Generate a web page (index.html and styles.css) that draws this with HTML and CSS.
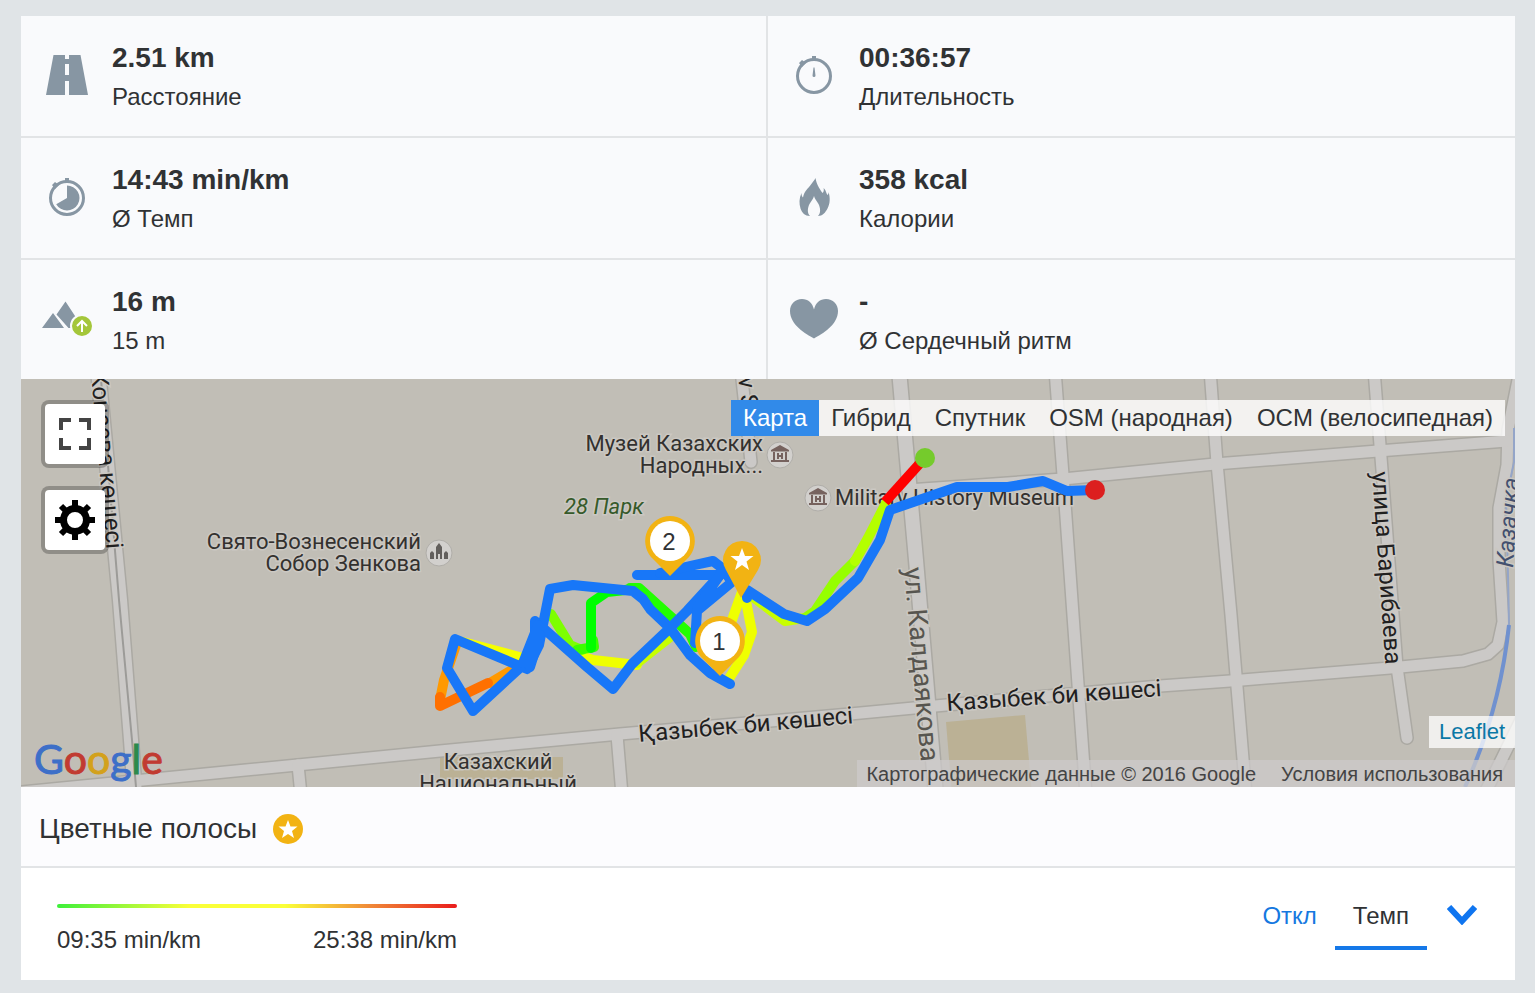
FILE: index.html
```html
<!DOCTYPE html>
<html lang="ru">

<head>
    <meta charset="UTF-8">
    <meta name="viewport" content="width=device-width, initial-scale=1.0">
    <title>Тренировка</title>
    <link rel="stylesheet" href="styles.css">
</head>

<body>
    <main class="workout">
        <!-- Summary -->
        <section class="stats">
            <div class="stat">
                <svg class="stat-icon" viewBox="0 0 52 52">
                    <path d="M12.500 6h27l7.500 40H5z" />
                    <path class="cut" d="M24 5h4v5h-4zM24 15h4v11h-4zM24 32h4v14.500h-4z" />
                </svg>
                <div>
                    <div class="stat-value">2.51 km</div>
                    <div class="stat-label">Расстояние</div>
                </div>
            </div>
            <div class="stat">
                <svg class="stat-icon" viewBox="0 0 52 52">
                    <circle class="line" cx="26" cy="27" r="16.500" />
                    <path d="M24 7h4v5h-4zM11 14l3-3 4 3-4 4zM25.500 18.500h1l1 8a1.500 1.500 0 1 1-3 0z" />
                </svg>
                <div>
                    <div class="stat-value">00:36:57</div>
                    <div class="stat-label">Длительность</div>
                </div>
            </div>
            <div class="stat">
                <svg class="stat-icon" viewBox="0 0 52 52">
                    <circle class="line" cx="26" cy="27" r="16.500" />
                    <path d="M24 7h4v5h-4zM11 14l3-3 4 3-4 4zM26 27V14.500a12.500 12.500 0 1 1-10.800 18.800z" />
                </svg>
                <div>
                    <div class="stat-value">14:43 min/km</div>
                    <div class="stat-label">Ø Темп</div>
                </div>
            </div>
            <div class="stat">
                <svg class="stat-icon" viewBox="0 0 52 52">
                    <path d="M27.500 7c1 6 3 9 7 15 1.500-1 1.500-4 1-5 3 3 2.500 5 4 7 1-1 1-2 1-3 2 6 1.500 12-1 16.500-2 4-5 7.500-9.500 7.500 3-3 2.500-8 .500-12-1.500-3-4-5-4.500-8-.500 3-3 5-4.500 8-2 4-2.500 9 .500 12-5 0-8-3-9.500-7.500-1.500-5-1.500-10 1-15.500 0 2 .500 4 1.500 4.500 1-6 5-9 8-13 2-3 4-5 4.500-6.500z" />
                </svg>
                <div>
                    <div class="stat-value">358 kcal</div>
                    <div class="stat-label">Калории</div>
                </div>
            </div>
            <div class="stat">
                <svg class="stat-icon" viewBox="0 0 52 52">
                    <path d="M1 35l11-15L23 35zM15.500 21.500L24.500 8.500 36 26l-4 9h-4.500z" />
                    <circle class="badge" cx="41" cy="33" r="11" />
                    <path class="arrow" d="M41 39V28M36 33l5-5 5 5" />
                </svg>
                <div>
                    <div class="stat-value">16 m</div>
                    <div class="stat-label">15 m</div>
                </div>
            </div>
            <div class="stat">
                <svg class="stat-icon" viewBox="0 0 52 52">
                    <path d="M26 45.500C18 41 2 32 2 18 2 11 7 6 14 6c6 0 10.500 4 12 10.500C27.500 10 32 6 38 6c7 0 12 5 12 12 0 14-16 23-24 27.500z" />
                </svg>
                <div>
                    <div class="stat-value">-</div>
                    <div class="stat-label">Ø Сердечный ритм</div>
                </div>
            </div>
        </section>

        <!-- Map -->
        <section class="map">
            <svg class="map-canvas" viewBox="21 379 1494 408" preserveAspectRatio="xMidYMid slice">
                <defs>
                    <g id="roads">
                        <path d="M10 793L440 751 620 734 850 714 935 706 1160 686 1230 681 1390 668 1463 661 1488 654 1498 645 1503 622 1499 560 1499 508 1507 465 1508 430 1520 370" />
                        <path d="M908 490L1063 479 1215 464 1378 451 1507 441" />
                        <path d="M1055 370L1063 475 1073 615 1086 795" />
                        <path d="M1210 370L1217 463 1231 615 1246 795" />
                        <path d="M1374 370L1382 470 1397 667 1407 738" />
                        <path d="M298 765L301 795M617 735L622 795M741 370L751 462M1484 795L1524 714" />
                    </g>
                    <path id="wide-roads" d="M899 370L916 560 936 795M98 370L120 600 131 740 135 795" />
                    <g id="museum">
                        <circle class="poi" r="13" />
                        <path class="poi-mark" d="M-9-5L0-10 9-5v1.500H-9zM-7-3h2V5h-2zM5-3h2V5H5zM-9 5H9v2H-9zM-3-2h2v2h2v-2h2v6H1V2h-2v2h-2z" />
                    </g>
                </defs>

                <path class="building" d="M946 722L1025 715 1032 795H952zM440 757H563V779H440z" />
                <use href="#roads" class="road-edge" />
                <use href="#wide-roads" class="road-edge wide" />
                <use href="#roads" class="road-fill" />
                <use href="#wide-roads" class="road-fill wide" />
                <path class="rail" d="M101 379L119 600 132 740 136 787" />
                <path class="river" d="M1509 625Q1500 710 1465 787" />
                <path class="river thin" d="M1514 428V462L1506 500 1508 575 1509 625" />

                <!-- Street and place names -->
                <g class="street">
                    <text transform="translate(91 372) rotate(85)">Конаева көшесі</text>
                    <text transform="translate(737 365) rotate(84)">ev St</text>
                    <text transform="translate(1372 472) rotate(86)">улица Барибаева</text>
                    <text transform="translate(639 742) rotate(-5)">Қазыбек би көшесі</text>
                    <text transform="translate(947 711) rotate(-4)">Қазыбек би көшесі</text>
                    <text class="major" transform="translate(904 568) rotate(85)">ул. Калдаякова</text>
                    <text class="water" transform="translate(1513 568) rotate(-86)">Казачка</text>
                </g>
                <g class="place">
                    <text x="763" y="451" text-anchor="end">Музей Казахских</text>
                    <text x="763" y="473" text-anchor="end">Народных...</text>
                    <text x="421" y="549" text-anchor="end">Свято-Вознесенский</text>
                    <text x="421" y="571" text-anchor="end">Собор Зенкова</text>
                    <text x="835" y="505">Military History Museum</text>
                    <text x="498" y="769" text-anchor="middle">Казахский</text>
                    <text x="498" y="791" text-anchor="middle">Национальный</text>
                    <text class="park" x="564" y="514">28 Парк</text>
                </g>
                <use href="#museum" x="780" y="455" />
                <use href="#museum" x="818" y="498" />
                <circle class="poi" cx="439" cy="553" r="13" />
                <path class="poi-tower" d="M430 559v-6l2-2 2 2v6zM444 559v-6l2-2 2 2v6zM436 559v-12l3-4 3 4v12h-2v-5h-2v5z" />

                <!-- Track coloured by pace -->
                <g class="track">
                    <path stroke="#f6ff00" d="M463 642L523 658" />
                    <path stroke="#ff9900" d="M456 645L444 680 440 700M490 683L522 664" />
                    <path stroke="#ff7000" d="M440 697V706L488 683" />
                    <path stroke="#efff00" d="M578 655L593 660 637 665" />
                    <path stroke="#c8ff00" d="M637 663L670 637" />
                    <path stroke="#7dff00" d="M551 614L570 645 582 650" />
                    <path stroke="#3cff00" d="M577 650L594 647 593 640" />
                    <path stroke="#00ff00" d="M591 648V603L607 592 634 589" />
                    <path stroke="#22ff00" d="M630 588L639 588 690 634 696 647" />
                    <path stroke="#efff00" d="M742 592L732 620M745 596L752 632 744 655 730 677" />
                    <path stroke="#c8ff00" d="M744 590L785 621 805 618" />
                    <path stroke="#96ff00" d="M805 618L815 611 835 581 855 561" />
                    <path stroke="#b4ff00" d="M855 561L868 538 886 503" />
                    <path class="fast" d="M885 502L922 461" />
                </g>
                <g class="route">
                    <path d="M1095 490L1067 491 1043 481 1008 487 957 487 890 510 880 540 858 578 825 609 807 621 784 614 747 590V598" />
                    <path d="M637 575H720L687 611 670 628 632 664 613 689 587 667 543 628 535 621V640L523 665 473 711 447 668 455 639 527 669 539 645 550 589 573 585 633 591 643 599 650 609 670 628 690 655 710 673 730 684" />
                    <path d="M660 573L690 566 713 561 722 568 732 582 697 611 695 643M720 575L697 608M523 663L538 625M530 667L540 635" />
                </g>
                <circle fill="#75cb2c" cx="925" cy="458" r="10" />
                <circle fill="#dc1f1f" cx="1095" cy="490" r="10" />

                <!-- Markers -->
                <g class="pin">
                    <path d="M670 516a25 25 0 0 1 19 41l-19 19-19-19a25 25 0 0 1 19-41z" />
                    <circle cx="670" cy="541" r="20" />
                    <text x="669" y="550">2</text>
                    <path d="M720 616a25 25 0 0 1 19 41l-19 19-19-19a25 25 0 0 1 19-41z" />
                    <circle cx="720" cy="641" r="20" />
                    <text x="719" y="650">1</text>
                    <path d="M742 541a19 19 0 0 1 16 29L741 598 726 570a19 19 0 0 1 16-29z" />
                    <path class="star" d="M742 548l3 8h8.500l-7 5.500 2.500 8.500-7-5-7 5 2.500-8.500-7-5.500h8.500z" />
                </g>
                <text class="google" x="34" y="774"><tspan class="blue">G</tspan><tspan class="red">o</tspan><tspan class="yellow">o</tspan><tspan class="blue">g</tspan><tspan class="green">l</tspan><tspan class="red">e</tspan></text>
            </svg>

            <div class="map-tools">
                <button type="button" class="map-button" aria-label="Во весь экран">
                    <svg viewBox="0 0 32 32">
                        <path fill="#444" d="M0 0h12v4H4v8H0zM20 0h12v12h-4V4h-8zM0 20h4v8h8v4H0zM28 20h4v12H20v-4h8z" />
                    </svg>
                </button>
                <button type="button" class="map-button" aria-label="Настройки">
                    <svg class="gear" viewBox="-20 -20 40 40">
                        <circle r="11.500" fill="none" stroke="#000" stroke-width="7" />
                        <path stroke="#000" stroke-width="6" d="M0-20v7M0 13v7M-20 0h7M13 0h7M-14-14l5 5M9 9l5 5M-14 14l5-5M9-9l5-5" />
                    </svg>
                </button>
            </div>

            <div class="layers">
                <button type="button" class="layer active">Карта</button>
                <button type="button" class="layer">Гибрид</button>
                <button type="button" class="layer">Спутник</button>
                <button type="button" class="layer">OSM (народная)</button>
                <button type="button" class="layer">OCM (велосипедная)</button>
            </div>

            <a class="leaflet" href="#">Leaflet</a>
            <div class="copyright">
                <span>Картографические данные © 2016 Google</span>
                <a href="#">Условия использования</a>
            </div>
        </section>

        <!-- Coloured track settings -->
        <section class="stripes">
            <h2>Цветные полосы</h2>
            <svg class="premium" viewBox="0 0 30 30">
                <circle fill="#f2b313" cx="15" cy="15" r="15" />
                <path fill="#fff" d="M15 6l2.500 6.500h7l-5.500 4.500 2 7-6-4-6 4 2-7-5.500-4.500h7z" />
            </svg>
        </section>
        <section class="pace">
            <div class="legend">
                <div class="legend-bar"></div>
                <div class="legend-labels">
                    <span>09:35 min/km</span>
                    <span>25:38 min/km</span>
                </div>
            </div>
            <nav class="modes">
                <a class="mode" href="#">Откл</a>
                <a class="mode selected" href="#">Темп</a>
                <button type="button" class="more" aria-label="Ещё">
                    <svg viewBox="0 0 30 20">
                        <path d="M2 2l13 14L28 2" />
                    </svg>
                </button>
            </nav>
        </section>
    </main>
</body>

</html>
```

FILE: styles.css
```css
* {
    box-sizing: border-box;
}

body {
    margin: 0;
    padding: 16px 20px 13px 21px;
    background-color: #e0e4e7;
    color: #303234;
    font-family: "Liberation Sans", Arial, sans-serif;
    font-size: 24px;
}

button {
    font: inherit;
    color: inherit;
    border: none;
    cursor: pointer;
}

a {
    text-decoration: none;
}

.workout {
    background-color: #fff;
}

/* Summary */
.stats {
    display: grid;
    grid-template-columns: 1fr 1fr;
    background-color: #f9fafc;
}

.stat {
    display: flex;
    gap: 19px;
    padding: 22px 20px 20px;
    border-bottom: 2px solid #e2e4e6;
}

.stat:nth-child(odd) {
    border-right: 2px solid #e2e4e6;
}

.stat:nth-last-child(-n+2) {
    border-bottom: none;
    padding-bottom: 19px;
}

.stat-icon {
    width: 52px;
    height: 52px;
    margin-top: 11px;
    flex: none;
    fill: #8796a3;
}

.stat-icon .cut {
    fill: #f9fafc;
}

.stat-icon .line {
    fill: none;
    stroke: #8796a3;
    stroke-width: 3;
}

.stat-icon .badge {
    fill: #a4c63a;
    stroke: #f9fafc;
    stroke-width: 2;
}

.stat-icon .arrow {
    fill: none;
    stroke: #fff;
    stroke-width: 2;
}

.stat-value {
    font-size: 28px;
    font-weight: bold;
    line-height: 40px;
}

.stat-label {
    line-height: 38px;
}

/* Map */
.map {
    position: relative;
    height: 408px;
    overflow: hidden;
    background-color: #c1beb6;
}

.map-canvas {
    display: block;
    width: 100%;
    height: 100%;
    font-family: Roboto, sans-serif;
}

.building {
    fill: #bbb195;
}

.road-edge,
.road-fill {
    fill: none;
    stroke-linecap: round;
    stroke-linejoin: round;
}

.road-edge {
    stroke: #aba9a3;
    stroke-width: 14px;
}

.road-fill {
    stroke: #cbc9c7;
    stroke-width: 11px;
}

.road-edge.wide {
    stroke-width: 17px;
}

.road-fill.wide {
    stroke-width: 14px;
}

.rail {
    fill: none;
    stroke: #9c9b98;
    stroke-width: 2px;
}

.river {
    fill: none;
    stroke: #7091cf;
    stroke-width: 4px;
}

.river.thin {
    stroke: #94a5c8;
    stroke-width: 2px;
}

.street,
.place {
    fill: #33312f;
    stroke: #cbc8c2;
    stroke-width: 3px;
    paint-order: stroke;
    font-size: 22px;
}

.street {
    fill: #21201f;
    font-size: 24px;
}

.street .major {
    fill: #57554f;
    font-size: 27px;
}

.street .water {
    fill: #43506f;
    font-style: italic;
}

.place .park {
    fill: #365a2a;
    font-style: italic;
}

.poi {
    fill: #d2d0cd;
    stroke: #b0aea9;
    stroke-width: 1px;
}

.poi-mark {
    fill: #76625e;
}

.poi-tower {
    fill: #625f5c;
}

.track,
.route {
    fill: none;
    stroke-width: 10px;
    stroke-linejoin: round;
    stroke-linecap: round;
}

.track .fast {
    stroke: #f00;
    stroke-linecap: butt;
}

.route {
    stroke: #1877f8;
}

.pin {
    fill: #f2b313;
}

.pin circle,
.pin .star {
    fill: #fff;
}

.pin text {
    fill: #303234;
    font-family: "Liberation Sans", Arial, sans-serif;
    font-size: 24px;
    text-anchor: middle;
}

.google {
    font-family: Lato, sans-serif;
    font-size: 41px;
    stroke-width: 1px;
}

.google .blue {
    fill: #3d6fc8;
    stroke: #3d6fc8;
}

.google .red {
    fill: #c13b31;
    stroke: #c13b31;
}

.google .yellow {
    fill: #d3a11c;
    stroke: #d3a11c;
}

.google .green {
    fill: #2c8a4b;
    stroke: #2c8a4b;
}

.map-tools {
    position: absolute;
    top: 21px;
    left: 20px;
    display: flex;
    flex-direction: column;
    gap: 18px;
}

.map-button {
    display: flex;
    align-items: center;
    justify-content: center;
    width: 68px;
    height: 68px;
    padding: 0;
    background-color: #fff;
    background-clip: padding-box;
    border: 4px solid rgba(0, 0, 0, 0.25);
    border-radius: 8px;
}

.map-button svg {
    width: 32px;
    height: 32px;
}

.map-button .gear {
    width: 40px;
    height: 40px;
}

.layers {
    position: absolute;
    top: 21px;
    right: 10px;
    display: flex;
    background-color: rgba(255, 255, 255, 0.8);
}

.layer {
    padding: 0 12px;
    line-height: 36px;
    background: none;
}

.layer.active {
    background-color: #318ae9;
    color: #fff;
}

.leaflet {
    position: absolute;
    right: 0;
    bottom: 39px;
    padding: 0 10px;
    font-size: 22px;
    line-height: 32px;
    color: #0b78a6;
    background-color: rgba(255, 255, 255, 0.75);
}

.copyright {
    position: absolute;
    right: 0;
    bottom: 0;
    display: flex;
    padding-top: 2px;
    font-size: 20px;
    line-height: 25px;
    color: #444;
    background-color: rgba(204, 202, 202, 0.75);
}

.copyright span,
.copyright a {
    padding: 0 12px 0 9px;
    color: inherit;
}

.copyright span {
    padding-right: 16px;
}

/* Pace settings */
.stripes {
    display: flex;
    align-items: center;
    gap: 16px;
    height: 81px;
    padding: 4px 18px 0;
    background-color: #fcfcfe;
    border-bottom: 2px solid #e2e4e6;
}

.stripes h2 {
    margin: 0;
    font-size: 28px;
    font-weight: normal;
}

.premium {
    width: 30px;
    height: 30px;
}

.pace {
    display: flex;
    justify-content: space-between;
    align-items: flex-start;
    height: 112px;
    padding: 0 38px 0 36px;
}

.legend {
    width: 400px;
    padding-top: 36px;
}

.legend-bar {
    height: 4px;
    border-radius: 2px;
    background: linear-gradient(to right, #3df03a, #faff38 33%, #faff38 57%, #f08a38 78%, #ea1c1c);
}

.legend-labels {
    display: flex;
    justify-content: space-between;
    line-height: 28px;
    margin-top: 18px;
}

.modes {
    display: flex;
    align-items: flex-start;
    padding-top: 14px;
}

.mode {
    padding: 0 18px;
    line-height: 68px;
    color: #1578e0;
}

.mode.selected {
    height: 68px;
    color: #303234;
    border-bottom: 4px solid #1578e8;
}

.more {
    padding: 23px 0 0 20px;
    background: none;
}

.more svg {
    display: block;
    width: 30px;
    height: 20px;
    fill: none;
    stroke: #0f75f0;
    stroke-width: 6px;
}
```
